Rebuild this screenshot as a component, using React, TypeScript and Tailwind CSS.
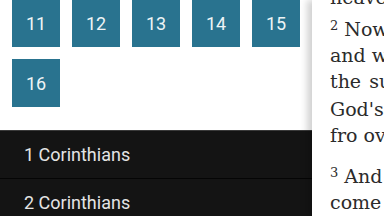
import React from 'react';

const chapters = [11, 12, 13, 14, 15, 16];
const books = ['1 Corinthians', '2 Corinthians'];

const serif = { fontFamily: '"DejaVu Serif", serif' };

const App = () => {
  return (
    <div className="relative flex w-[384px] h-[216px] overflow-hidden bg-white">
      {/* drawer */}
      <div className="flex flex-col w-[312px] shrink-0">
        <div className="h-[130px] shrink-0 bg-white overflow-hidden">
          <div className="flex flex-wrap gap-[12px] pl-[12px] -mt-[1px]">
            {chapters.map((c) => (
              <div
                key={c}
                className="w-[48px] h-[48px] bg-[#29738f] flex items-center justify-center text-[18px] text-[#eef4f6] font-['Roboto',sans-serif]"
              >
                {c}
              </div>
            ))}
          </div>
        </div>
        <div className="flex-1 bg-[#141414] border-t border-[#3a3a3a]">
          {books.map((b) => (
            <div
              key={b}
              className="h-[48px] flex items-center pl-[24px] border-b border-[#050505] text-[18px] text-[#e4e4e4] font-['Roboto',sans-serif]"
            >
              {b}
            </div>
          ))}
        </div>
      </div>

      {/* reading pane */}
      <div
        className="relative z-10 flex-1 bg-white pl-[18px] text-[19px] leading-[26px] text-[#2b2b2b] whitespace-nowrap shadow-[-5px_0_7px_rgba(0,0,0,0.18)]"
        style={serif}
      >
        <div className="-mt-[16px]">heavens and the earth.</div>
        <div className="mt-[6px]">
          <div>
            <sup className="text-[13px] mr-[6px]">2</sup>Now the earth proved to be
          </div>
          <div>and waste and there was darkness</div>
          <div>
            the<span className="ml-[8px]">surface of the watery deep;</span>
          </div>
          <div className="mt-[2px]">God's active force was moving to and</div>
          <div>fro over the surface of the waters.</div>
        </div>
        <div className="mt-[15px]">
          <div>
            <sup className="text-[13px] mr-[6px]">3</sup>And God proceeded to say:
          </div>
          <div>come to be.” Then there came to be</div>
        </div>
      </div>
    </div>
  );
};

export default App;
